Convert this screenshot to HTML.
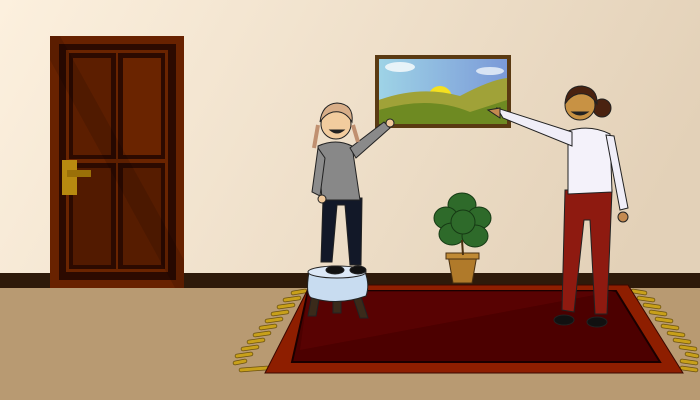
<!DOCTYPE html>
<html><head><meta charset="utf-8"><style>html,body{margin:0;padding:0;width:700px;height:400px;overflow:hidden}svg{display:block}</style></head>
<body>
<svg width="700" height="400" viewBox="0 0 700 400" xmlns="http://www.w3.org/2000/svg">
<defs>
<linearGradient id="wall" x1="0" y1="0" x2="1" y2="0.3"><stop offset="0" stop-color="#fcf0de"/><stop offset="1" stop-color="#e3d1b8"/></linearGradient>
<linearGradient id="sky" x1="0" y1="0" x2="1" y2="0"><stop offset="0" stop-color="#9ed3e6"/><stop offset="1" stop-color="#7b9ad8"/></linearGradient>
</defs>
<rect width="700" height="400" fill="url(#wall)"/>
<rect y="273" width="700" height="15" fill="#2e1a0a"/>
<rect y="288" width="700" height="112" fill="#b89a72"/>
<rect x="50" y="36" width="134" height="252" fill="#682200"/>
<rect x="59" y="44" width="117" height="236" fill="#2c0a00"/>
<rect x="66" y="50" width="102" height="222" fill="#6a2400"/>
<rect x="69" y="53" width="47" height="106" fill="#2c0a00"/><rect x="73" y="58" width="38" height="97" fill="#5c1e00"/>
<rect x="118" y="53" width="47" height="106" fill="#2c0a00"/><rect x="123" y="58" width="38" height="97" fill="#6a2400"/>
<rect x="69" y="163" width="47" height="106" fill="#2c0a00"/><rect x="73" y="168" width="38" height="97" fill="#521a00"/>
<rect x="118" y="163" width="47" height="106" fill="#2c0a00"/><rect x="123" y="168" width="38" height="97" fill="#561c00"/>
<polygon points="50,36 60,36 184,260 184,288 175,288 50,60" fill="#000" opacity="0.12"/>
<rect x="62" y="160" width="15" height="35" fill="#b88a10"/>
<rect x="67" y="170" width="24" height="7" fill="#9a7008"/>
<rect x="375" y="55" width="136" height="73" fill="#5a3a12"/>
<rect x="379" y="59" width="128" height="65" fill="url(#sky)"/>
<ellipse cx="400" cy="67" rx="15" ry="5" fill="#e8f3f8"/>
<ellipse cx="490" cy="71" rx="14" ry="4" fill="#d8e4f4"/>
<circle cx="440" cy="98" r="12" fill="#f5e020"/>
<path d="M379,100 Q420,85 460,96 Q490,80 507,78 L507,124 L379,124Z" fill="#a0a238"/>
<path d="M379,110 Q430,95 470,112 Q495,104 507,100 L507,124 L379,124Z" fill="#6e8a22"/>
<g stroke="#6a5010" stroke-width="4.5" stroke-linecap="round">
<path d="M305,291 l-12,2 M299,298 l-14,2 M293,305 l-14,2 M287,312 l-14,2 M281,319 l-14,2 M275,326 l-14,2 M269,333 l-14,2 M263,340 l-14,2 M257,347 l-14,2 M251,354 l-14,2 M245,361 l-10,2 M267,368 l-26,2"/>
<path d="M633,291 l12,2 M639,298 l14,2 M645,305 l14,2 M651,312 l14,2 M657,319 l14,2 M663,326 l14,2 M669,333 l14,2 M675,340 l14,2 M681,347 l14,2 M687,354 l10,2 M682,361 l14,2 M682,368 l14,2"/>
</g>
<g stroke="#c8a01a" stroke-width="3" stroke-linecap="round">
<path d="M305,291 l-12,2 M299,298 l-14,2 M293,305 l-14,2 M287,312 l-14,2 M281,319 l-14,2 M275,326 l-14,2 M269,333 l-14,2 M263,340 l-14,2 M257,347 l-14,2 M251,354 l-14,2 M245,361 l-10,2 M267,368 l-26,2"/>
<path d="M633,291 l12,2 M639,298 l14,2 M645,305 l14,2 M651,312 l14,2 M657,319 l14,2 M663,326 l14,2 M669,333 l14,2 M675,340 l14,2 M681,347 l14,2 M687,354 l10,2 M682,361 l14,2 M682,368 l14,2"/>
</g>
<polygon points="310,285 628,285 683,373 265,373" fill="#8e1e00" stroke="#3a0800" stroke-width="1"/>
<polygon points="308,291 616,291 660,362 292,362" fill="#4c0000" stroke="#1a0000" stroke-width="2"/>
<polygon points="308,291 616,291 300,350" fill="#600404" opacity="0.6"/>
<path d="M448,255 L477,255 L472,283 L453,283Z" fill="#b07a2a" stroke="#4a3010"/>
<rect x="446" y="253" width="33" height="6" fill="#c08a34" stroke="#4a3010"/>
<g fill="#2e6a2a" stroke="#163a14" stroke-width="1">
<ellipse cx="462" cy="205" rx="14" ry="12"/><ellipse cx="446" cy="218" rx="12" ry="11"/><ellipse cx="479" cy="218" rx="12" ry="11"/>
<ellipse cx="452" cy="234" rx="13" ry="11"/><ellipse cx="475" cy="236" rx="13" ry="11"/><ellipse cx="463" cy="222" rx="12" ry="12"/>
</g>
<path d="M462,240 L463,255" stroke="#4a3010" stroke-width="2"/>
<g stroke="#222" stroke-width="1">
<path d="M312,294 L308,316 L316,316 L320,294Z" fill="#3a2a1a"/>
<path d="M333,296 L333,313 L341,313 L341,296Z" fill="#3a2a1a"/>
<path d="M352,294 L360,318 L368,318 L360,294Z" fill="#3a2a1a"/>
<path d="M309,272 Q305,296 312,298 Q338,306 366,296 Q370,285 365,272Z" fill="#c8dcf0"/>
<ellipse cx="337" cy="272" rx="29" ry="6" fill="#dce8f6"/>
</g>
<g stroke="#222" stroke-width="1">
<path d="M323,198 L321,262 L332,262 L337,205 L345,205 L350,265 L361,265 L362,198Z" fill="#121828"/>
<ellipse cx="335" cy="270" rx="9" ry="4" fill="#111"/><ellipse cx="358" cy="270" rx="8" ry="4" fill="#111"/>
<path d="M318,146 Q336,138 352,146 L360,200 L322,200Z" fill="#888"/>
<path d="M318,148 L312,192 L320,196 L325,158Z" fill="#8c8c8c"/>
<path d="M350,148 L356,158 L390,128 L384,122Z" fill="#8a8a8a"/>
<circle cx="390" cy="123" r="4" fill="#f0c89a"/>
<circle cx="322" cy="199" r="4" fill="#f0c89a"/>
<circle cx="336" cy="124" r="15" fill="#f2cc9e"/>
<path d="M320,122 Q322,104 337,103 Q354,104 352,122 Q345,110 333,112 Q325,114 320,122Z" fill="#d8ae88"/>
<path d="M318,125 L314,148" stroke="#c09070" stroke-width="4"/><path d="M353,125 L358,142" stroke="#c09070" stroke-width="4"/>
<path d="M330,130 Q337,136 344,130Z" fill="#222"/>
</g>
<g stroke="#222" stroke-width="1">
<path d="M565,190 L562,310 L574,312 L584,220 L590,220 L595,314 L607,314 L612,190Z" fill="#8e1a10"/>
<ellipse cx="564" cy="320" rx="10" ry="5" fill="#111"/><ellipse cx="597" cy="322" rx="10" ry="5" fill="#111"/>
<path d="M568,131 Q590,124 610,134 L612,192 L568,194 Z" fill="#f4f2fa"/>
<path d="M572,132 L572,146 L503,118 L497,108Z" fill="#f0eef8"/>
<path d="M606,135 L614,136 L628,208 L620,210Z" fill="#f0eef8"/>
<path d="M488,110 L500,108 L500,118 Z" fill="#c48a50"/>
<circle cx="623" cy="217" r="5" fill="#c48a50"/>
<circle cx="602" cy="108" r="9" fill="#4a2210"/>
<circle cx="580" cy="105" r="15" fill="#c89244"/>
<path d="M565,104 Q566,86 582,86 Q598,88 597,104 Q590,92 578,94 Q570,96 565,104Z" fill="#4a2210"/>
<path d="M572,112 Q580,118 588,112Z" fill="#222"/>
</g>
</svg>
</body></html>
